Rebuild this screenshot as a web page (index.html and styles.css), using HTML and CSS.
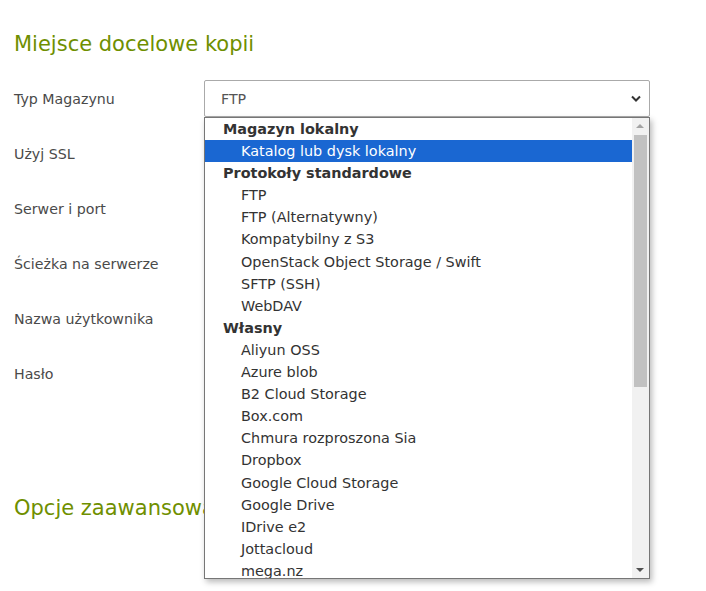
FILE: index.html
```html
<!DOCTYPE html>
<html lang="pl">
<head>
<meta charset="utf-8">
<title>Miejsce docelowe kopii</title>
<link rel="stylesheet" href="styles.css">
</head>
<body>
<div class="page">
  <h2 class="section-title">Miejsce docelowe kopii</h2>
  <div class="form">
    <div class="row">
      <div class="label">Typ Magazynu</div>
      <div class="field">
        <div class="select">
          <span>FTP</span>
          <svg class="chevron" width="10" height="7" viewBox="0 0 10 7"><polyline points="1,1.5 5,5.5 9,1.5" fill="none" stroke="#333" stroke-width="2"/></svg>
        </div>
        <div class="dropdown">
          <div class="list">
            <div class="group">Magazyn lokalny</div>
            <div class="opt selected">Katalog lub dysk lokalny</div>
            <div class="group">Protokoły standardowe</div>
            <div class="opt">FTP</div>
            <div class="opt">FTP (Alternatywny)</div>
            <div class="opt">Kompatybilny z S3</div>
            <div class="opt">OpenStack Object Storage / Swift</div>
            <div class="opt">SFTP (SSH)</div>
            <div class="opt">WebDAV</div>
            <div class="group">Własny</div>
            <div class="opt">Aliyun OSS</div>
            <div class="opt">Azure blob</div>
            <div class="opt">B2 Cloud Storage</div>
            <div class="opt">Box.com</div>
            <div class="opt">Chmura rozproszona Sia</div>
            <div class="opt">Dropbox</div>
            <div class="opt">Google Cloud Storage</div>
            <div class="opt">Google Drive</div>
            <div class="opt">IDrive e2</div>
            <div class="opt">Jottacloud</div>
            <div class="opt">mega.nz</div>
          </div>
          <div class="scrollbar">
            <div class="arrow up"></div>
            <div class="track"><div class="thumb"></div></div>
            <div class="arrow down"></div>
          </div>
        </div>
      </div>
    </div>
    <div class="row"><div class="label">Użyj SSL</div><div class="field"></div></div>
    <div class="row"><div class="label">Serwer i port</div><div class="field"></div></div>
    <div class="row"><div class="label">Ścieżka na serwerze</div><div class="field"></div></div>
    <div class="row"><div class="label">Nazwa użytkownika</div><div class="field"></div></div>
    <div class="row"><div class="label">Hasło</div><div class="field"></div></div>
  </div>
  <h2 class="section-title second">Opcje zaawansowane</h2>
</div>
</body>
</html>
```
FILE: styles.css
```css
html, body {
  margin: 0;
  padding: 0;
  background: #ffffff;
}
body {
  font-family: "DejaVu Sans", Verdana, sans-serif;
  font-size: 14.2px;
  color: #444444;
}
.page {
  box-sizing: border-box;
  min-height: 591px;
  padding: 0 14px;
}
.section-title {
  margin: 0;
  padding-top: 31px;
  font-size: 21px;
  line-height: 26px;
  font-weight: normal;
  color: #6f8f00;
}
.section-title.second {
  padding-top: 103px;
}
.form {
  margin-top: 23px;
  display: flex;
  flex-direction: column;
  gap: 18px;
}
.row {
  display: flex;
  align-items: center;
  height: 37px;
}
.label {
  width: 190px;
  flex: none;
  color: #4a4a4a;
}
.field {
  position: relative;
  width: 446px;
  height: 37px;
}
.select {
  box-sizing: border-box;
  height: 37px;
  border: 1px solid #aaaaaa;
  border-radius: 2px;
  display: flex;
  align-items: center;
  justify-content: space-between;
  padding: 0 8px 0 16px;
  color: #555555;
}
.chevron {
  display: block;
}
.dropdown {
  position: absolute;
  left: 0;
  top: 37px;
  width: 446px;
  height: 462px;
  box-sizing: border-box;
  border: 1px solid #767676;
  background: #ffffff;
  box-shadow: 2px 3px 6px rgba(0, 0, 0, 0.28);
  display: flex;
  overflow: hidden;
  z-index: 5;
}
.list {
  flex: 1;
  color: #333333;
  font-size: 14.4px;
}
.group, .opt {
  height: 22.1px;
  line-height: 22.1px;
  white-space: nowrap;
}
.group {
  font-weight: bold;
  padding-left: 18px;
}
.opt {
  padding-left: 36px;
}
.opt.selected {
  background: #1a67d2;
  color: #ffffff;
}
.scrollbar {
  width: 17px;
  flex: none;
  background: #f1f1f1;
  display: flex;
  flex-direction: column;
}
.arrow {
  height: 17px;
  flex: none;
  position: relative;
}
.arrow::after {
  content: "";
  position: absolute;
  left: 4px;
  width: 0;
  height: 0;
  border-left: 4px solid transparent;
  border-right: 4px solid transparent;
}
.arrow.up::after {
  top: 6px;
  border-bottom: 4px solid #a3a3a3;
}
.arrow.down::after {
  top: 7px;
  border-top: 4px solid #505050;
}
.track {
  flex: 1;
  padding: 0 2px;
}
.thumb {
  height: 252px;
  background: #c1c1c1;
}
```
